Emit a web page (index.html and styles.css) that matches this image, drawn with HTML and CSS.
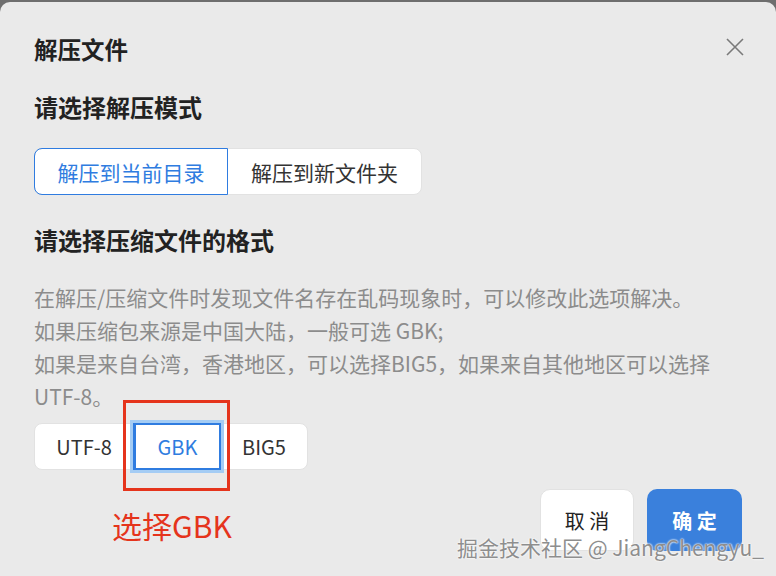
FILE: index.html
```html
<!DOCTYPE html>
<html lang="zh-CN">
<head>
    <meta charset="UTF-8">
    <meta name="viewport" content="width=device-width, initial-scale=1.0">
    <title>解压文件</title>
    <link rel="stylesheet" href="styles.css">
</head>
<body>
    <div class="dialog">
        <h1 class="title">解压文件</h1>
        <button class="close-btn" aria-label="关闭">
            <svg width="18" height="18" viewBox="0 0 18 18">
                <path d="M1 1 L17 17 M17 1 L1 17" stroke="#7a7a7a" stroke-width="1.6" fill="none"/>
            </svg>
        </button>

        <h2 class="section-title">请选择解压模式</h2>
        <div class="segmented mode">
            <button class="seg active">解压到当前目录</button>
            <button class="seg">解压到新文件夹</button>
        </div>

        <h2 class="section-title format-title">请选择压缩文件的格式</h2>
        <p class="hint">
            在解压/压缩文件时发现文件名存在乱码现象时，可以修改此选项解决。<br>
            如果压缩包来源是中国大陆，一般可选 GBK;<br>
            如果是来自台湾，香港地区，可以选择BIG5，如果来自其他地区可以选择<br>
            UTF-8。
        </p>
        <div class="segmented encoding">
            <button class="seg">UTF-8</button>
            <button class="seg active focused">GBK<span class="mark-box"></span></button>
            <button class="seg">BIG5</button>
        </div>

        <div class="footer">
            <span class="annotation">选择GBK</span>
            <div class="actions">
                <button class="btn btn-cancel">取 消</button>
                <button class="btn btn-ok">确 定</button>
            </div>
        </div>

        <span class="watermark">掘金技术社区 @ JiangChengyu_</span>
    </div>
</body>
</html>
```

FILE: styles.css
```css
* {
    box-sizing: border-box;
}
body {
    margin: 0;
    background: #6e6e6e;
    font-family: "Noto Sans CJK SC", "Noto Sans", sans-serif;
    overflow: hidden;
}
.dialog {
    position: relative;
    margin-top: 2px;
    height: 574px;
    padding: 32px 34px 0;
    background: #eaeaea;
    border-radius: 10px 10px 0 0;
}
.title {
    margin: 0;
    font-size: 23.5px;
    line-height: 30px;
    font-weight: 700;
    color: #222;
}
.close-btn {
    position: absolute;
    top: 33px;
    right: 29px;
    width: 24px;
    height: 24px;
    padding: 3px;
    border: none;
    background: none;
    cursor: pointer;
}
.section-title {
    margin: 28px 0 0;
    font-size: 24px;
    line-height: 30px;
    font-weight: 700;
    color: #222;
}
.segmented {
    display: flex;
    width: max-content;
    margin-top: 26px;
    background: #fff;
    border: 1px solid #e2e2e2;
    border-radius: 8px;
}
.seg {
    position: relative;
    height: 45px;
    border: 1px solid transparent;
    background: none;
    font-family: inherit;
    font-size: 21px;
    color: #333;
    cursor: pointer;
}
.mode .seg {
    width: 193px;
}
.mode .seg.active {
    width: 194px;
    margin: -1px 0 -1px -1px;
    height: 47px;
    border-color: #2f7ce0;
    border-radius: 8px 0 0 8px;
    color: #2f7ce0;
}
.format-title {
    margin-top: 30px;
}
.hint {
    margin: 26px 0 0;
    font-size: 21px;
    line-height: 33px;
    color: #8c8c8c;
}
.encoding {
    margin-top: 10px;
}
.encoding .seg {
    width: 92px;
    font-size: 20px;
}
.encoding .seg:first-child {
    width: 98px;
}
.encoding .seg:last-child {
    width: 86px;
}
.encoding .seg.active {
    width: 88px;
    margin: -1px 0;
    height: 47px;
    border: 2px solid #2f7ce0;
    border-left-width: 3px;
    color: #2f7ce0;
    box-shadow: 0 0 0 3px #a4ccf4;
}
.mark-box {
    position: absolute;
    top: -25px;
    left: -13px;
    width: 107px;
    height: 91px;
    border: 3px solid #e5341c;
    pointer-events: none;
}
.footer {
    display: flex;
    justify-content: space-between;
    align-items: center;
    margin-top: 19px;
}
.annotation {
    margin-left: 78px;
    margin-top: 10px;
    font-size: 30px;
    color: #e5341c;
}
.actions {
    display: flex;
    gap: 13px;
}
.btn {
    width: 94px;
    height: 62px;
    border-radius: 10px;
    font-family: inherit;
    font-size: 20px;
    cursor: pointer;
}
.btn-cancel {
    background: #fff;
    border: 1px solid #e2e2e2;
    color: #222;
}
.btn-ok {
    width: 95px;
    background: #3a80dc;
    border: none;
    color: #fff;
    font-weight: 700;
}
.watermark {
    position: absolute;
    left: 457px;
    top: 530px;
    font-size: 21px;
    line-height: 30px;
    color: #8e8e8e;
    text-shadow: 0 0 2px #fff, 0 0 2px #fff;
    white-space: nowrap;
}
```
